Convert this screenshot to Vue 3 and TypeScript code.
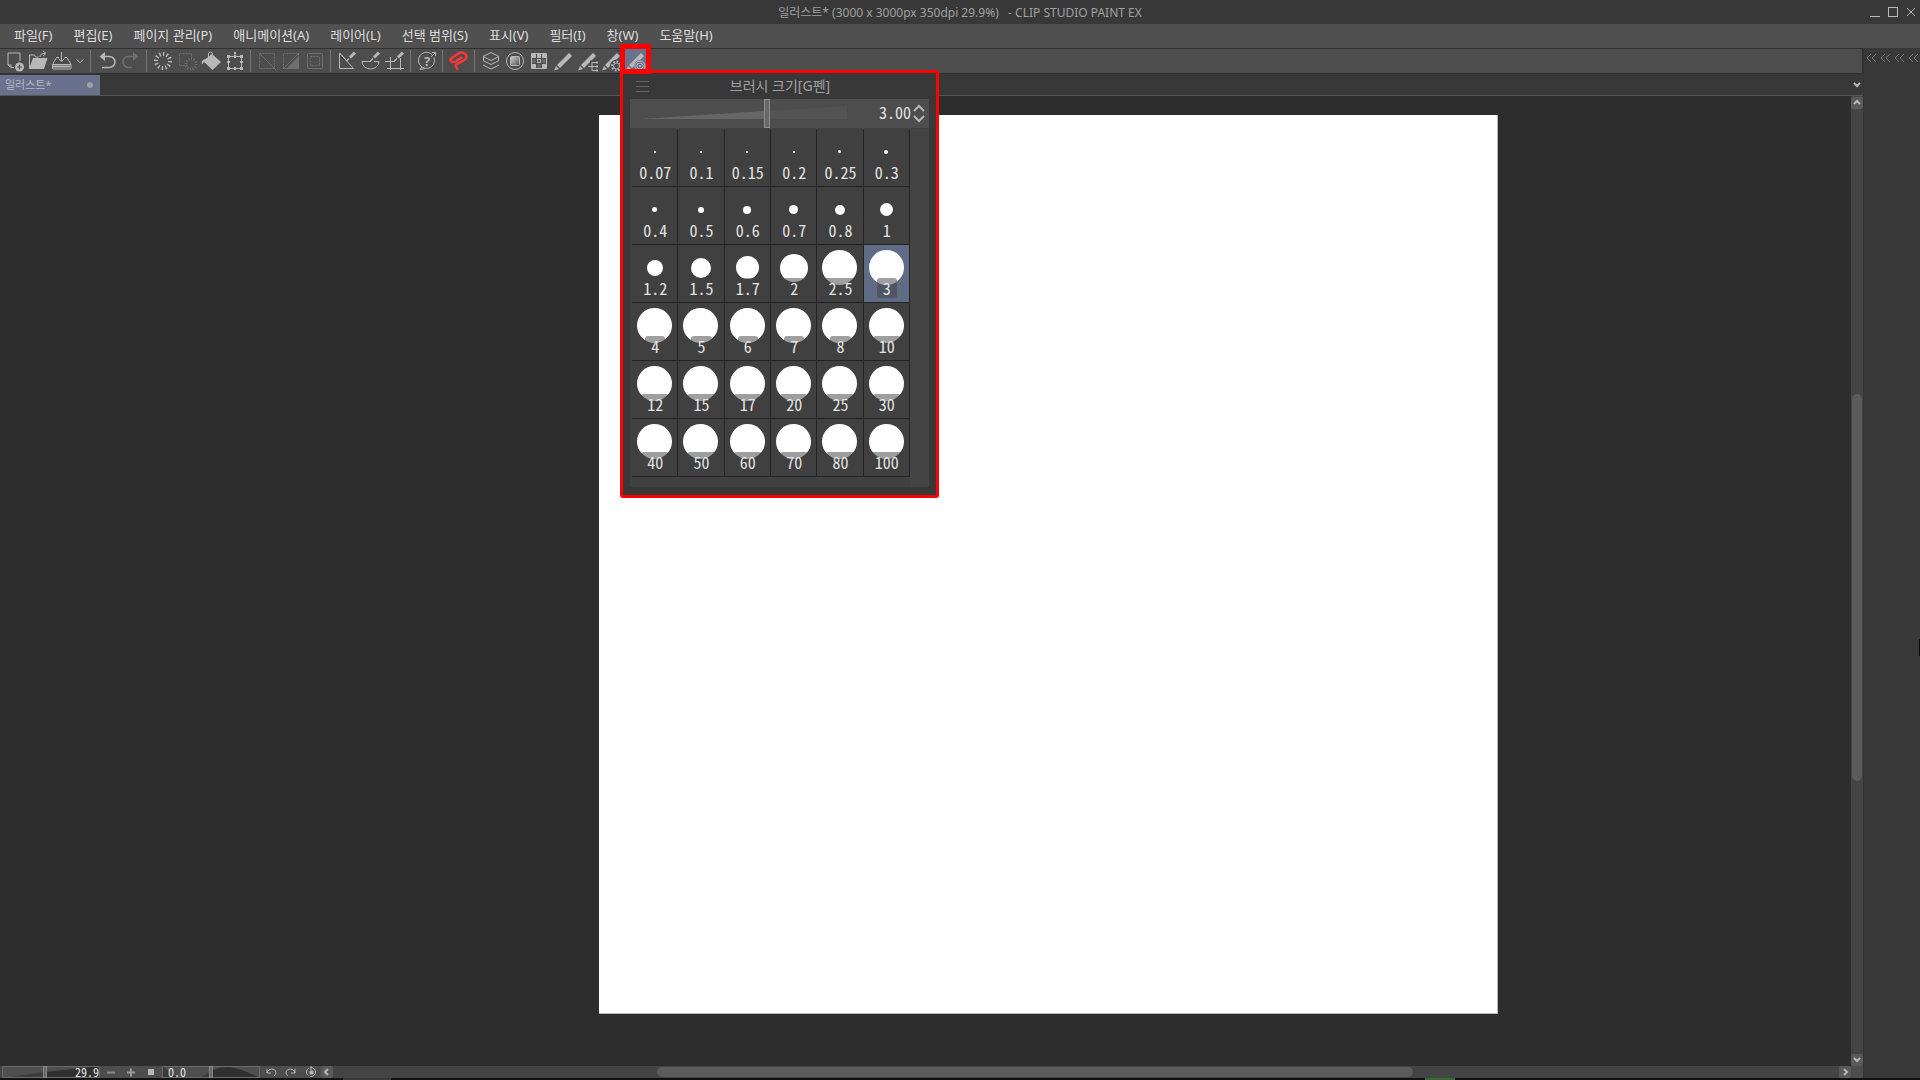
<script setup lang="ts">
import { computed, ref } from 'vue'

interface Tool { name: string; art: string; kind?: 'narrow' | 'slim'; dim?: boolean; active?: boolean }
interface Brush { size: string; dot: number }

const menus = ['파일(F)', '편집(E)', '페이지 관리(P)', '애니메이션(A)', '레이어(L)', '선택 범위(S)', '표시(V)', '필터(I)', '창(W)', '도움말(H)']

const pencil = '<path d="M18 4l3 3-12 12-3-3z" fill="currentColor" stroke="none"/><path d="M5 17l3 3-5 1.500z" fill="currentColor" stroke="none"/>'
const smallPen = '<path d="M20 3.500l-5 5" stroke-width="3"/><path d="M14 9.500l-2.500 2.500" stroke-width="1.500"/>'

const groups: Tool[][] = [
  [
    { name: '새로 만들기', art: '<path d="M17 12V4H5v12l3 2.500h3M5 16h3v2"/><circle cx="16.500" cy="18" r="4.500" fill="currentColor" stroke="none"/><path d="M16.500 15.500v5M14 18h5" stroke="#4d4d4d"/>' },
    { name: '열기', art: '<path d="M2.500 19V6h5l1 2h3M13 8c0-3 2-3.500 5-3.500M16 2l3 2.500L16 7"/><path d="M6 9h14.500L17 20H2z" fill="currentColor" stroke="none"/>' },
    { name: '저장', kind: 'slim', art: '<path d="M8 8.500H5.500l-4 7v4q0 .5.5.5h17.500q.5 0 .5-.5v-4l-4-7H13.500M1.500 15.500h18.500M10.500 3v9M7.500 9.500l3 3 3-3"/><path d="M2 17.500h17" stroke-width="2"/>' },
    { name: '저장 옵션', kind: 'narrow', art: '<path d="M3.500 10.500L7 13.500l3.500-3"/>' },
  ],
  [
    { name: '실행 취소', art: '<path d="M9 7.500h5.500a5.500 5.500 0 0 1 0 11H7" stroke-width="1.500"/><path d="M4.500 7.500L10 3v9z" fill="currentColor" stroke="none"/>' },
    { name: '다시 실행', dim: true, art: '<path d="M15 7.500H9.500a5.500 5.500 0 0 0 0 11H13" stroke-width="1.500"/><path d="M19.500 7.500L14 3v9z" fill="currentColor" stroke="none"/>' },
  ],
  [
    { name: '지우기', art: '<circle cx="12" cy="12" r="7" stroke-width="4" pathLength="48" stroke-dasharray="1.500 2.500"/>' },
    { name: '선택 이외 지우기', dim: true, art: '<path d="M4.500 4.500h12v12h-12z" stroke-dasharray="2 1"/><circle cx="16" cy="15" r="6" fill="#4d4d4d" stroke="none"/><circle cx="16" cy="15" r="5" stroke-width="3" pathLength="48" stroke-dasharray="1.500 2.500"/>' },
    { name: '채우기', art: '<path d="M4 12l9-7 9 8-8.500 8z" fill="currentColor" stroke="none"/><path d="M9.500 8V5a2 2 0 0 1 4 0v5"/><path d="M6 10c-3 1-4 3-3 6 1-2 2-4 5-5z" fill="currentColor" stroke="none"/>' },
    { name: '확대/축소/회전', art: '<path d="M5.500 7.500h13v12h-13zM12 7V3.500"/><path d="M4 6h3v3H4zM17 6h3v3h-3zM4 18h3v3H4zM17 18h3v3h-3zM11 3h2v2h-2zM11 6h2v3h-2zM11 18h2v3h-2zM4 12h3v2H4zM17 12h3v2h-3z" fill="currentColor" stroke="none"/>' },
  ],
  [
    { name: '선택 해제', dim: true, art: '<path d="M4.500 4.500h15v15h-15z" stroke-dasharray="2 1"/><path d="M4 4l17 17"/>' },
    { name: '선택 반전', dim: true, art: '<path d="M4.500 4.500h15v15h-15z" stroke-dasharray="2 1"/><path d="M20 7v13H7z" fill="currentColor" stroke="none"/><path d="M4 20L20 4"/>' },
    { name: '선택 경계', dim: true, art: '<rect x="4.500" y="4.500" width="15" height="15" rx="1"/><path d="M7.500 7.500h9v9h-9z" stroke-dasharray="2 1"/>' },
  ],
  [
    { name: '자에 스냅', art: '<path d="M4.500 4v15.500h14zM4.500 4l6 6" stroke-width="1"/>' + smallPen },
    { name: '특수 자에 스냅', art: '<path d="M15 12.500h5a8 7 0 0 1-17 0h9" stroke-width="1"/>' + smallPen },
    { name: '그리드에 스냅', art: '<path d="M2 12.500h10M4 19.500h17M7.500 8v13M17.500 9v12" stroke-width="1"/>' + smallPen },
  ],
  [
    { name: '도움말', art: '<path d="M17 5.500a8 8 0 1 0 2 3M7 18l-2 2.500 5-1M16 8l4.500-4.500M17 3.500h3.500V7"/><text x="12" y="17" text-anchor="middle" font-family="Noto Sans, sans-serif" font-size="13" font-weight="700" fill="currentColor" stroke="none">?</text>' },
  ],
  [
    { name: 'CLIP STUDIO', art: '<path d="M15 8L8.500 12.500C4.500 14.500 2 11 4.500 9L11.500 4.500C17 1.500 21.500 6.500 18.500 10C16.500 12.500 12 13.500 8.500 16L10.500 21" stroke="#ff3636" stroke-width="2.500" stroke-linejoin="round"/>' },
  ],
  [
    { name: '레이어', art: '<path d="M12 3.500l8 4-8 4-8-4zM4 11.500l8 4 8-4M4 16l8 4 8-4" /><path d="M4.500 7.500v4M19.500 7.500v4" stroke-width="1"/>' },
    { name: '레이어 속성', art: '<defs><linearGradient id="shade" x1="0" y1="0" x2="1" y2="1"><stop offset="0.200" stop-color="#b8b8b8"/><stop offset="1" stop-color="#4d4d4d"/></linearGradient></defs><circle cx="12" cy="12" r="8.500"/><rect x="7.500" y="7.500" width="9" height="9" rx="1" fill="url(#shade)"/>' },
    { name: '컬러 세트', art: '<rect x="4" y="4" width="16" height="16" rx="1" fill="currentColor" stroke="none"/><path d="M5 10h4v4H5zM15 10h4v4h-4zM10 15h4v4h-4z" fill="#646464" stroke="none"/><path d="M11 11h2v2h-2z" fill="#4d4d4d" stroke="none"/><path d="M9.500 5v14M14.500 5v14M5 9.500h14M5 14.500h14" stroke="#4d4d4d" stroke-width="1"/>' },
    { name: '보조 도구', art: pencil },
    { name: '보조 도구 목록', art: pencil + '<path d="M13 17.500h9M22 13.500h-5v8h5" stroke="#4d4d4d" stroke-width="4"/><path d="M13 17.500h9M22 13.500h-5v8h5"/><path d="M21 12.500h2v2h-2zM21 16.500h2v2h-2zM21 20.500h2v2h-2z" fill="currentColor" stroke="none"/>' },
    { name: '도구 속성', art: pencil + '<circle cx="17.500" cy="17" r="6.500" fill="#4d4d4d" stroke="none"/><circle cx="17.500" cy="17" r="3"/><circle cx="17.500" cy="17" r="4.500" stroke-width="2" pathLength="32" stroke-dasharray="2 2"/>' },
    { name: '브러시 크기', active: true, art: pencil + '<circle cx="17" cy="17" r="6" fill="#67728e" stroke="none"/><circle cx="17" cy="17" r="5" stroke-width="1"/><circle cx="17" cy="17" r="3" stroke-width="1"/><circle cx="17" cy="17" r="1" fill="currentColor" stroke="none"/>' },
  ],
]

const brushes: Brush[] = [
  ['0.07', 2], ['0.1', 2], ['0.15', 2], ['0.2', 2], ['0.25', 3], ['0.3', 4],
  ['0.4', 5], ['0.5', 6], ['0.6', 8], ['0.7', 9], ['0.8', 10], ['1', 13],
  ['1.2', 16], ['1.5', 20], ['1.7', 23], ['2', 28], ['2.5', 35], ['3', 35],
  ['4', 35], ['5', 35], ['6', 35], ['7', 35], ['8', 35], ['10', 35],
  ['12', 35], ['15', 35], ['17', 35], ['20', 35], ['25', 35], ['30', 35],
  ['40', 35], ['50', 35], ['60', 35], ['70', 35], ['80', 35], ['100', 35],
].map(([size, dot]) => ({ size: String(size), dot: Number(dot) }))

const selected = ref('3')
const sizeText = computed(() => Number(selected.value).toFixed(2))
</script>

<template>
  <div class="app">
    <header class="titlebar">
      <h1>일러스트* (3000 x 3000px 350dpi 29.9%)&nbsp;&nbsp; - CLIP STUDIO PAINT EX</h1>
      <div class="window-buttons">
        <button aria-label="최소화"><svg width="12" height="12"><path d="M1 10.500h10" /></svg></button>
        <button aria-label="최대화"><svg width="12" height="12"><rect x="1.500" y="1.500" width="9" height="9" /></svg></button>
        <button aria-label="닫기"><svg width="12" height="12"><path d="M2 2l8 8M10 2l-8 8" /></svg></button>
      </div>
    </header>

    <nav class="menubar">
      <button v-for="m in menus" :key="m">{{ m }}</button>
    </nav>

    <div class="body">
      <div class="main">
        <div class="toolbar">
          <div v-for="(g, i) in groups" :key="i" class="group">
            <button v-for="t in g" :key="t.name" :aria-label="t.name" :class="['tool', t.kind, { dim: t.dim, active: t.active }]">
              <svg height="24" :width="t.kind === 'narrow' ? 14 : t.kind === 'slim' ? 22 : 24" v-html="t.art" />
              <span v-if="t.active" class="marker" />
            </button>
          </div>
        </div>

        <div class="tabs">
          <button class="tab"><span>일러스트*</span><i /></button>
          <button class="tab-list" aria-label="탭 목록"><svg width="12" height="12"><path d="M3 4l3 3 3-3" stroke-width="2" /></svg></button>
        </div>

        <div class="workspace">
          <div class="viewport"><div class="paper" /></div>
          <div class="vscroll">
            <button aria-label="위로"><svg width="12" height="12"><path d="M3 7l3-3 3 3" stroke-width="2" /></svg></button>
            <div class="lane"><div class="thumb" /></div>
            <button aria-label="아래로"><svg width="12" height="12"><path d="M3 4l3 3 3-3" stroke-width="2" /></svg></button>
          </div>
        </div>

        <div class="status">
          <div class="mini">
            <svg viewBox="0 0 98 12" preserveAspectRatio="none"><path d="M0 12L43 6V12z" fill="#3c3c3c" /><path d="M43 6L98 0V12H43z" fill="#303030" /></svg>
            <input type="range" min="0" max="100" value="43" aria-label="확대율">
            <output class="right">29.9</output>
          </div>
          <div class="zoom-buttons">
            <button aria-label="축소"><svg width="12" height="12"><path d="M2 6.500h8" stroke-width="2" stroke="#888" /></svg></button>
            <button aria-label="확대"><svg width="12" height="12"><path d="M2 6.500h8M6 2.500v8" stroke-width="2" stroke="#999" /></svg></button>
            <button aria-label="맞춤"><svg width="12" height="12"><path d="M3 3h6v6H3z" fill="#b8b8b8" stroke="none" /></svg></button>
          </div>
          <div class="mini">
            <svg viewBox="0 0 98 12" preserveAspectRatio="none"><path d="M0 0V12H22C12 12 6 4 0 0zM34 12Q42 11 49 5V12z" fill="#383838" /><path d="M49 5Q56 1 66 1T98 12H49z" fill="#303030" /></svg>
            <input type="range" min="0" max="100" value="50" aria-label="회전">
            <output class="left">0.0</output>
          </div>
          <div class="rotate-buttons">
            <button aria-label="왼쪽 회전"><svg width="12" height="12"><path d="M2 3v4h4M2 7c1-5 8-5 9-1 0 2-1 3-2 4" /></svg></button>
            <button aria-label="오른쪽 회전"><svg width="12" height="12"><path d="M10 3v4H6M10 7C9 2 2 2 1 6c0 2 1 3 2 4" /></svg></button>
            <button aria-label="회전 재설정"><svg width="12" height="12"><circle cx="6" cy="6" r="4.500" stroke-dasharray="8 2" /><path d="M5 5h3v3H5zM6 0v4" fill="#b0b0b0" /></svg></button>
          </div>
          <button class="step" aria-label="왼쪽으로"><svg width="12" height="12"><path d="M7 3L4 6l3 3" stroke-width="2" /></svg></button>
          <div class="hlane"><div class="thumb" /></div>
          <button class="step" aria-label="오른쪽으로"><svg width="12" height="12"><path d="M5 3l3 3-3 3" stroke-width="2" /></svg></button>
          <div class="corner" />
        </div>
      </div>

      <aside class="dock">
        <div class="dock-head">
          <button v-for="n in 4" :key="n" aria-label="팔레트 펼치기"><svg width="12" height="12"><path d="M5 2L1 6l4 4M10 2L6 6l4 4" /></svg></button>
        </div>
        <span class="grip" />
      </aside>
    </div>

    <footer class="taskline"><span class="a" /><span class="b" /></footer>

    <section class="panel">
      <header class="panel-head">
        <button aria-label="메뉴"><svg width="14" height="14"><path d="M1 2.500h13M1 7.500h13M1 12.500h13" /></svg></button>
        <h2>브러시 크기[G펜]</h2>
      </header>
      <div class="panel-slider">
        <div class="wedge">
          <svg viewBox="0 0 206 29" preserveAspectRatio="none"><path d="M0 20L206 7V20z" fill="#535353" /><path d="M0 20L124 12V20z" fill="#666" /></svg>
          <input type="range" min="0" max="1000" value="615" aria-label="브러시 크기">
        </div>
        <input class="amount" type="text" :value="sizeText" aria-label="크기 값">
        <div class="spin">
          <button aria-label="증가"><svg width="14" height="10"><path d="M2 8l5-5 5 5" stroke-width="2" /></svg></button>
          <button aria-label="감소"><svg width="14" height="10"><path d="M2 2l5 5 5-5" stroke-width="2" /></svg></button>
        </div>
      </div>
      <div class="panel-body">
        <div class="sizes">
          <button v-for="b in brushes" :key="b.size" :class="{ on: b.size === selected }" @click="selected = b.size">
            <span class="dot-box"><span class="dot" :style="{ width: b.dot + 'px', height: b.dot + 'px' }" /></span>
            <span class="label">{{ b.size }}</span>
          </button>
        </div>
        <div class="gutter" />
      </div>
    </section>
  </div>
</template>

<style>
html, body { margin: 0; background: #2d2d2d; }
</style>

<style scoped>
.app { position: relative; display: flex; flex-direction: column; height: 100vh; overflow: hidden; background: #383838; color: #dedede; font: 12px/16px "Noto Sans", "Noto Sans CJK KR", sans-serif; }
.app * { box-sizing: border-box; }
button { margin: 0; padding: 0; border: 0; background: none; color: inherit; font: inherit; flex: none; }
svg { display: block; fill: none; stroke: #b8b8b8; }
h1, h2 { margin: 0; font-size: 12px; font-weight: 400; }

.titlebar { display: grid; grid-template-columns: 1fr auto 1fr; align-items: center; height: 24px; flex: none; color: #a0a0a0; }
.titlebar h1 { grid-column: 2; padding-top: 1px; }
.window-buttons { display: flex; justify-content: flex-end; gap: 6px; padding-right: 3px; }

.menubar { display: flex; gap: 21px; height: 24px; flex: none; padding: 0 0 2px 14px; background: #505050; font-size: 13px; white-space: nowrap; }

.body { display: flex; flex: 1; min-height: 0; }
.main { display: flex; flex-direction: column; flex: 1; min-width: 0; }

.toolbar { display: flex; height: 26px; flex: none; padding-left: 3px; background: #4d4d4d; border: solid #303030; border-width: 1px 1px 1px 0; }
.group { display: flex; }
.group + .group { padding-left: 8px; background: linear-gradient(#757575, #757575) 3px 1px / 1px 22px no-repeat; }
.tool { position: relative; width: 24px; height: 24px; color: #b8b8b8; }
.tool svg { stroke: currentColor; }
.tool.slim { width: 22px; }
.tool.narrow { width: 14px; }
.tool.dim { color: #6f6f6f; }
.tool.active { background: #67728e; }
.marker { position: absolute; z-index: 3; inset: -5px -4px -1px -3px; border: 5px solid #f00; border-radius: 1px; }

.tabs { display: flex; justify-content: space-between; align-items: flex-start; height: 22px; flex: none; padding-top: 1px; border-bottom: 1px solid #555; }
.tab { display: flex; align-items: center; justify-content: space-between; width: 100px; height: 20px; padding: 0 7px 0 5px; background: #68728c; color: #b4b8c2; font-size: 11px; }
.tab i { width: 6px; height: 6px; border-radius: 50%; background: #a0a0a0; }
.tab-list { padding: 4px 0; }

.workspace { display: flex; flex: 1; min-height: 0; background: #2d2d2d; }
.viewport { position: relative; flex: 1; overflow: hidden; }
.paper { position: absolute; left: 599px; top: 19px; width: 899px; height: 899px; background: #fff; border: solid #b8b8b8; border-width: 0 1px 1px 0; }
.vscroll { display: flex; flex-direction: column; width: 12px; padding-top: 1px; background: #444; }
.vscroll button, .step { width: 12px; height: 12px; border-radius: 2px; background: #5a5a5a; }
.lane { display: flex; flex: 1; padding: 285px 1px 273px; }
.lane .thumb, .hlane .thumb { flex: 1; border-radius: 5px; background: #5b5b5b; }

.status { display: flex; height: 12px; flex: none; padding-left: 2px; background: #444; }
.mini { display: grid; width: 98px; height: 12px; background: #4f4f4f; }
.mini > * { grid-area: 1 / 1; min-width: 0; }
.mini svg { width: 98px; height: 12px; stroke: none; }
.mini input { width: 98px; height: 12px; border: 1px solid #6a6a6a; }
.mini output { font: 12px/12px "Noto Sans Mono CJK KR", "Noto Sans CJK KR", monospace; color: #e6e6e6; padding: 0 1px; z-index: 1; pointer-events: none; }
.mini .right { text-align: right; }
.mini .left { padding-left: 6px; }
.zoom-buttons, .rotate-buttons { display: flex; gap: 8px; background: #4d4d4d; }
.zoom-buttons { padding: 0 5px 0 5px; width: 62px; }
.rotate-buttons { padding-left: 5px; width: 61px; }
.hlane { display: flex; flex: 1; padding: 1px 426px 1px 324px; }
.corner { width: 12px; background: #4d4d4d; }

input { margin: 0; padding: 0; border: 0; background: none; outline: 0; border-radius: 0; }
input[type="range"] { appearance: none; }
.mini input::-webkit-slider-thumb { appearance: none; width: 4px; height: 12px; background: #666; border: 1px solid #8a8a8a; }
.wedge input::-webkit-slider-thumb { appearance: none; width: 6px; height: 29px; background: #686868; border: 1px solid #8e8e8e; }

.dock { display: flex; flex-direction: column; justify-content: space-between; width: 57px; flex: none; border-left: 1px solid #333; }
.dock-head { display: flex; gap: 2px; padding: 4px 0 0 2px; }
.dock-head svg { stroke: #777; }
.grip { align-self: flex-end; width: 1px; height: 17px; margin-bottom: 422px; background: #0a0a14; }

.taskline { display: flex; height: 2px; flex: none; background: #111; }
.a { width: 48px; margin-left: 343px; background: #3a3838; }
.b { width: 30px; margin-left: 1034px; background: #356a35; }

.panel { position: absolute; z-index: 2; left: 620px; top: 70px; width: 319px; padding: 0 7px 8px; border: 3px solid #f00; border-radius: 3px; background: #383838; }
.panel-head { display: grid; grid-template-columns: 16px 1fr 20px; align-items: center; height: 26px; padding-left: 5px; }
.panel-head svg { stroke: #666; }
.panel-head h2 { color: #a0a0a0; text-align: center; font-size: 14px; }
.panel-slider { display: flex; align-items: center; height: 29px; padding: 0 3px 0 11px; background: #4d4d4d; }
.wedge { display: grid; width: 206px; height: 29px; flex: none; }
.wedge > * { grid-area: 1 / 1; width: 206px; height: 29px; stroke: none; }
.amount { flex: 1; min-width: 0; padding-bottom: 4px; text-align: right; color: #e2e2e2; font: 16px/20px "Noto Sans Mono CJK KR", "Noto Sans CJK KR", monospace; }
.spin { display: flex; flex-direction: column; justify-content: space-between; height: 21px; padding-left: 1px; }
.panel-body { display: flex; background: #404040; padding: 1px 0 0 2px; }
.sizes { display: grid; grid-template-columns: repeat(6, minmax(0, 1fr)); flex: 1; min-width: 0; margin-bottom: 10px; }
.sizes button { display: grid; grid-template-columns: 100%; justify-items: center; height: 58px; border: solid #242424; border-width: 0 1px 1px 0; }
.sizes button > * { grid-area: 1 / 1; }
.sizes .on { background: #606b85; }
.dot-box { display: grid; place-items: center; width: 35px; height: 35px; margin-top: 5px; }
.dot { border-radius: 50%; background: #fff; }
.label { z-index: 1; height: 20px; margin: 33px 0 0 1px; padding: 0 6px; border-radius: 3px; background: #40404080; color: #e4e4e4; font: 16px/20px "Noto Sans Mono CJK KR", "Noto Sans CJK KR", monospace; }
.gutter { width: 19px; flex: none; background: #444; }
</style>
